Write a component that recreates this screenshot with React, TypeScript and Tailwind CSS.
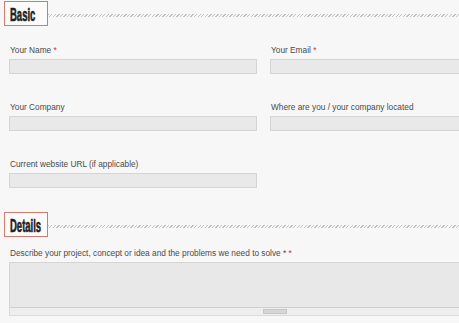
import React from "react";

const hatch =
  "bg-[repeating-linear-gradient(135deg,#c2c2c2_0px,#c2c2c2_1px,transparent_1px,transparent_2.5px)]";

const SectionHeader: React.FC<{ title: string }> = ({ title }) => (
  <div className="flex items-start pl-[4px]">
    <div className="w-[44px] h-[25px] shrink-0 border border-[#d9786c] bg-[#fbfbfb] overflow-hidden pl-[5px] pt-[2px]">
      <span className="inline-block text-[19px] leading-[19px] font-bold text-[#222] origin-left scale-x-[0.5] whitespace-nowrap [-webkit-text-stroke:0.6px_#222]">
        {title}
      </span>
    </div>
    <div className={`flex-1 mt-[13px] h-[3px] ${hatch}`} />
  </div>
);

const Label: React.FC<{ text: string; required?: boolean; extra?: string }> = ({ text, required, extra }) => (
  <div className="h-[10px] leading-[10px] text-[8.3px] text-[#4a4a4a] pl-[1px] mb-[4px] whitespace-nowrap">
    {text}
    {extra && <span> {extra}</span>}
    {required && <span className="text-[#e41b1b]"> *</span>}
  </div>
);

const Input: React.FC = () => (
  <div className="h-[15px] bg-[#e9e9e9] border border-[#d5d5d5]" />
);

const Field: React.FC<{ label: string; required?: boolean }> = ({ label, required }) => (
  <div>
    <Label text={label} required={required} />
    <Input />
  </div>
);

export default function App() {
  return (
    <div className="w-[459px] h-[323px] overflow-hidden bg-[#f7f7f7] font-['Liberation_Sans',Arial,sans-serif]">
      <div className="w-[540px] pt-[1px]">
        <SectionHeader title="Basic" />

        <div className="pl-[9px] mt-[19px] grid grid-cols-[248px_248px] gap-x-[13px] gap-y-[28px]">
          <Field label="Your Name" required />
          <Field label="Your Email" required />
          <Field label="Your Company" />
          <Field label="Where are you / your company located" />
          <Field label="Current website URL (if applicable)" />
        </div>

        <div className="mt-[24px]">
          <SectionHeader title="Details" />
        </div>

        <div className="pl-[9px] w-[518px] mt-[11px]">
          <Label text="Describe your project, concept or idea and the problems we need to solve" extra="*" required />
          <div className="h-[46px] bg-[#e8e8e8] border border-[#d5d5d5] border-b-[#cfcfcf]" />
          <div className="h-[8px] bg-[#eeeeee] border border-t-0 border-[#dcdcdc] flex justify-center items-center">
            <div className="w-[24px] h-[5px] bg-[#d6d6d6] border border-[#c8c8c8] ml-[22px]" />
          </div>
        </div>
      </div>
    </div>
  );
}
